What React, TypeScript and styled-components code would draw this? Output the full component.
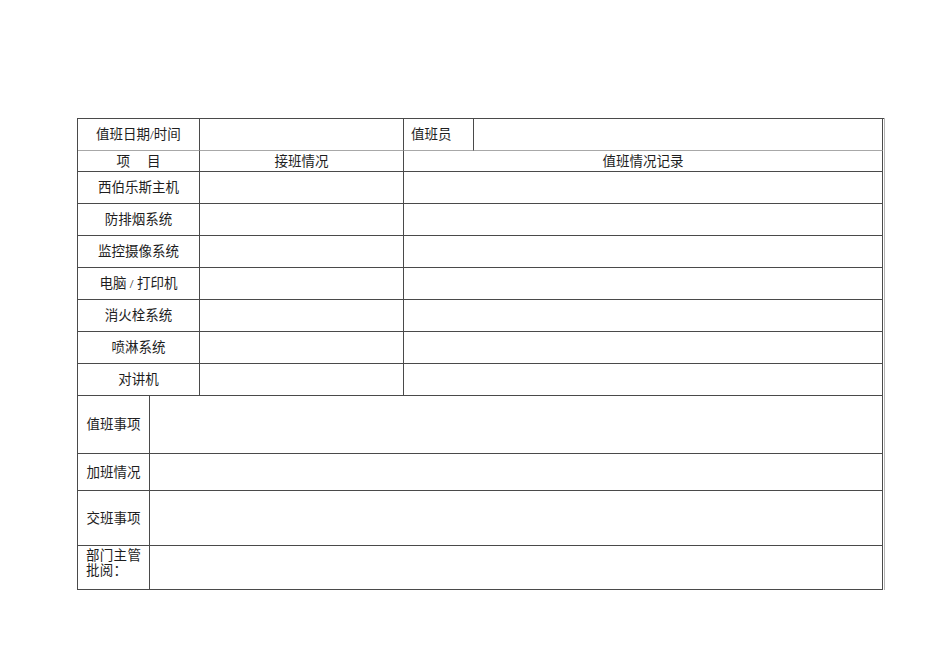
import { Fragment } from 'react'
import styled, { createGlobalStyle } from 'styled-components'

const GlobalStyle = createGlobalStyle`
    html, body {
        margin: 0;
        background: #ffffff;
    }
`

const Page = styled.div`
    width: 950px;
    height: 672px;
    padding: 118px 0 0 77px;
    box-sizing: border-box;
    background: #ffffff;
`

const Sheet = styled.div`
    display: grid;
    grid-template-columns: 72px 50px 204px 70px 409px;
    grid-template-rows: 32px 21px repeat(7, 32px) 58px 37px 55px 44px;
    width: 806px;
    border-top: 1px solid #4a4a4a;
    border-left: 1px solid #4a4a4a;
    box-shadow: 1px 0 0 #b4b4b4;
    font-family: "Liberation Serif", "Noto Sans CJK SC", serif;
    font-size: 13.5px;
    color: #1e1e1e;
`

const Cell = styled.div<{ $span?: number; $align?: string; $top?: boolean; $light?: boolean }>`
    grid-column: span ${p => p.$span || 1};
    display: flex;
    flex-direction: ${p => (p.$top ? 'column' : 'row')};
    align-items: ${p => (p.$top ? 'flex-start' : 'center')};
    justify-content: ${p => p.$align || 'center'};
    padding: ${p => (p.$top ? '2px 8px 0' : '0 7px')};
    border-right: 1px solid #4a4a4a;
    border-bottom: 1px solid ${p => (p.$light ? '#a8a8a8' : '#4a4a4a')};
    box-sizing: border-box;
    line-height: 15px;
    white-space: pre;
`

const Line = styled.span`
    display: block;
    letter-spacing: 0.3px;
`

const items = ['西伯乐斯主机', '防排烟系统', '监控摄像系统', '电脑 / 打印机', '消火栓系统', '喷淋系统', '对讲机']

const notes = ['值班事项', '加班情况', '交班事项']

const App = () => {
    return (
        <>
            <GlobalStyle />
            <Page>
                <Sheet>
                    <Cell $span={2} $light>值班日期/时间</Cell>
                    <Cell $light></Cell>
                    <Cell $align="flex-start" $light>值班员</Cell>
                    <Cell $light></Cell>

                    <Cell $span={2}>{'项\u3000 目'}</Cell>
                    <Cell>接班情况</Cell>
                    <Cell $span={2}>值班情况记录</Cell>

                    {items.map(item => (
                        <Fragment key={item}>
                            <Cell $span={2}>{item}</Cell>
                            <Cell></Cell>
                            <Cell $span={2}></Cell>
                        </Fragment>
                    ))}

                    {notes.map(note => (
                        <Fragment key={note}>
                            <Cell>{note}</Cell>
                            <Cell $span={4}></Cell>
                        </Fragment>
                    ))}

                    <Cell $top $align="flex-start">
                        <Line>部门主管</Line>
                        <Line>批阅：</Line>
                    </Cell>
                    <Cell $span={4}></Cell>
                </Sheet>
            </Page>
        </>
    )
}

export default App
